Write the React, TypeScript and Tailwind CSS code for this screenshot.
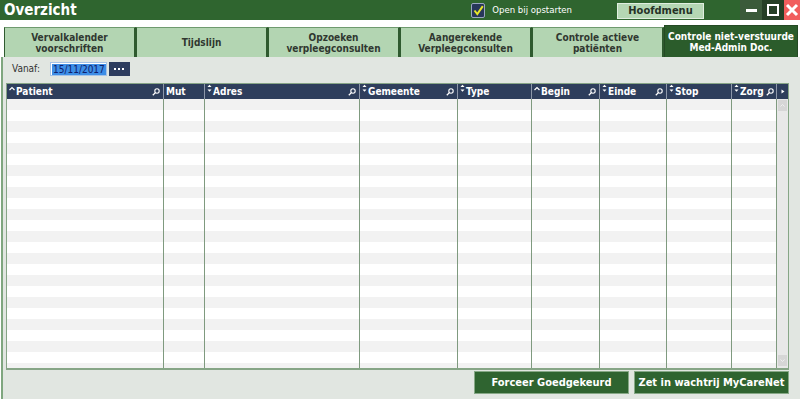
import React from "react";

const cols = [
  { name: "Patient", w: 157, sort: "up", search: true },
  { name: "Mut", w: 41, sort: "none", search: false },
  { name: "Adres", w: 155, sort: "both", search: true },
  { name: "Gemeente", w: 98, sort: "both", search: true },
  { name: "Type", w: 74, sort: "both", search: false },
  { name: "Begin", w: 68, sort: "up", search: true },
  { name: "Einde", w: 67, sort: "both", search: true },
  { name: "Stop", w: 65, sort: "both", search: false },
  { name: "Zorg", w: 45, sort: "both", search: true },
];

const tabs = [
  "Vervalkalender\nvoorschriften",
  "Tijdslijn",
  "Opzoeken\nverpleegconsulten",
  "Aangerekende\nVerpleegconsulten",
  "Controle actieve\npatiënten",
];

function Mag() {
  return (
    <svg width="8" height="8" viewBox="0 0 8 8" className="shrink-0">
      <circle cx="5" cy="3" r="2.2" fill="none" stroke="white" strokeWidth="1.1" />
      <line x1="3.4" y1="4.6" x2="0.8" y2="7.2" stroke="white" strokeWidth="1.3" />
    </svg>
  );
}

function Sort({ kind }: { kind: string }) {
  if (kind === "none") return null;
  if (kind === "up")
    return (
      <svg width="6" height="8" viewBox="0 0 6 8" className="shrink-0 self-start mt-[2px]">
        <path d="M0.5 4 L3 1.5 L5.5 4" fill="none" stroke="white" strokeWidth="1.2" />
      </svg>
    );
  return (
    <svg width="5" height="9" viewBox="0 0 5 9" className="shrink-0 self-start mt-[0px]">
      <path d="M0.5 3 L2.5 0.8 L4.5 3 Z" fill="white" />
      <path d="M0.5 5.5 L2.5 7.7 L4.5 5.5 Z" fill="white" />
    </svg>
  );
}

export default function App() {
  const rows = Array.from({ length: 25 });
  return (
    <div
      className="w-[800px] h-[399px] bg-white overflow-hidden flex flex-col whitespace-nowrap"
      style={{ fontFamily: '"DejaVu Sans Condensed", "Liberation Sans", sans-serif' }}
    >
      {/* title bar */}
      <div className="h-[20px] bg-[#2f652f] flex items-center shrink-0">
        <div className="pl-[4px] text-white font-bold text-[15px] leading-none">Overzicht</div>
        <div className="flex-1" />
        <div className="flex items-center gap-[7px] mr-[45px]">
          <div className="w-[14px] h-[15px] bg-[#27375a] border border-[#9aa6c0] rounded-[2px] flex items-center justify-center">
            <svg width="11" height="11" viewBox="0 0 11 11">
              <path d="M1.5 5.5 L4.3 9 L9.8 1.2" fill="none" stroke="#e6e62a" strokeWidth="2" />
            </svg>
          </div>
          <span className="text-white text-[9.5px] leading-none">Open bij opstarten</span>
        </div>
        <div className="w-[87px] h-[16px] mt-[1px] bg-[#b5d7b4] border border-[#e0efe0] flex items-center justify-center text-[#263226] font-bold text-[11px] leading-none">
          Hoofdmenu
        </div>
        <div className="w-[36px]" />
        <div className="w-[22px] h-[20px] bg-[#3b5a3a] flex items-center justify-center">
          <div className="w-[11px] h-[3px] bg-white" />
        </div>
        <div className="w-[22px] h-[20px] bg-[#253f25] flex items-center justify-center">
          <div className="w-[12px] h-[12px] border-2 border-white" />
        </div>
        <div className="w-[16px] h-[20px] bg-[#f15d5d] flex items-center justify-center">
          <svg width="14" height="14" viewBox="0 0 14 14">
            <path d="M2 2 L12 12 M12 2 L2 12" stroke="white" strokeWidth="3" />
          </svg>
        </div>
      </div>

      {/* tabs */}
      <div className="h-[37px] shrink-0 flex items-end pl-[4px] bg-white">
        {tabs.map((t, i) => (
          <div
            key={i}
            className="w-[132px] h-[30px] bg-[#b3d5b2] border-l border-r-2 border-t border-l-[#2f5a2f] border-r-[#2f5a2f] border-t-[#6e9a6e] flex items-center justify-center text-center whitespace-pre text-[#303830] font-bold text-[10px] leading-[11px]"
          >
            {t}
          </div>
        ))}
        <div className="w-[134px] h-[33px] bg-[#2b5c2b] border border-[#244a24] flex items-center justify-center text-center whitespace-pre text-white font-bold text-[10px] leading-[11px] mb-[-1px]">
          {"Controle niet-verstuurde\nMed-Admin Doc."}
        </div>
      </div>

      {/* content */}
      <div className="flex-1 bg-[#e1e6e1] border-l-2 border-[#7fa67f] ml-[1px] flex flex-col">
        <div className="h-[26px] flex items-center pl-[9px] pb-[2px]">
          <span className="text-[#333] text-[10px] leading-none">Vanaf:</span>
          <div className="ml-[10px] w-[57px] h-[14px] bg-white border border-[#a6c3e6] flex items-center pl-[1px]">
            <span className="bg-[#3d8ee6] text-[#10206a] text-[10px] leading-[11px] px-[1px]">15/11/2017</span>
          </div>
          <div className="ml-[2px] w-[21px] h-[14px] bg-[#2d3d5e] flex items-center justify-center gap-[2px]">
            <div className="w-[2px] h-[2px] bg-white" />
            <div className="w-[2px] h-[2px] bg-white" />
            <div className="w-[2px] h-[2px] bg-white" />
          </div>
        </div>

        {/* grid */}
        <div className="ml-[3px] w-[783px] h-[287px] border border-[#86a586] border-b-2 bg-white flex flex-col overflow-hidden">
          <div className="h-[15px] flex shrink-0 bg-[#2e3e5c]">
            {cols.map((c) => (
              <div
                key={c.name}
                style={{ width: c.w }}
                className="h-full border-r border-[#8d97aa] flex items-center pl-[2px] pr-[3px] gap-[1px] shrink-0"
              >
                <Sort kind={c.sort} />
                <span className="text-white font-bold text-[10px] leading-none">{c.name}</span>
                <div className="flex-1" />
                {c.search && <Mag />}
              </div>
            ))}
            <div className="w-[11px] h-full flex items-center justify-center">
              <svg width="4" height="5" viewBox="0 0 4 5">
                <path d="M0.5 0.5 L3.5 2.5 L0.5 4.5 Z" fill="white" />
              </svg>
            </div>
          </div>
          <div className="flex-1 flex overflow-hidden">
            <div className="flex flex-col">
              {rows.map((_, r) => (
                <div key={r} className={`h-[11px] flex shrink-0 ${r % 2 === 0 ? "bg-[#f2f2f2]" : "bg-white"}`}>
                  {cols.map((c) => (
                    <div key={c.name} style={{ width: c.w }} className="h-full border-r border-[#7f9a7f] shrink-0" />
                  ))}
                </div>
              ))}
            </div>
            <div className="w-[11px] bg-[#e8e8e8] flex flex-col justify-between pb-[2px]">
              <div className="h-[11px] mx-[1px] mt-[1px] bg-[#d6d6d6] flex items-center justify-center">
                <svg width="5" height="3" viewBox="0 0 5 3">
                  <path d="M0.5 2.5 L2.5 0.5 L4.5 2.5" fill="none" stroke="#f4f4f4" strokeWidth="0.8" />
                </svg>
              </div>
              <div className="h-[11px] mx-[1px] bg-[#d6d6d6] flex items-center justify-center">
                <svg width="5" height="3" viewBox="0 0 5 3">
                  <path d="M0.5 0.5 L2.5 2.5 L4.5 0.5" fill="none" stroke="#f4f4f4" strokeWidth="0.8" />
                </svg>
              </div>
            </div>
          </div>
        </div>

        <div className="flex justify-end gap-[5px] mt-[1px] pr-[11px]">
          <div className="w-[155px] h-[23px] bg-[#2f6430] border border-[#86a886] flex items-center justify-center text-white font-bold text-[11px] leading-none">
            Forceer Goedgekeurd
          </div>
          <div className="w-[155px] h-[23px] bg-[#2f6430] border border-[#86a886] flex items-center justify-center text-white font-bold text-[11px] leading-none">
            Zet in wachtrij MyCareNet
          </div>
        </div>
      </div>
    </div>
  );
}
